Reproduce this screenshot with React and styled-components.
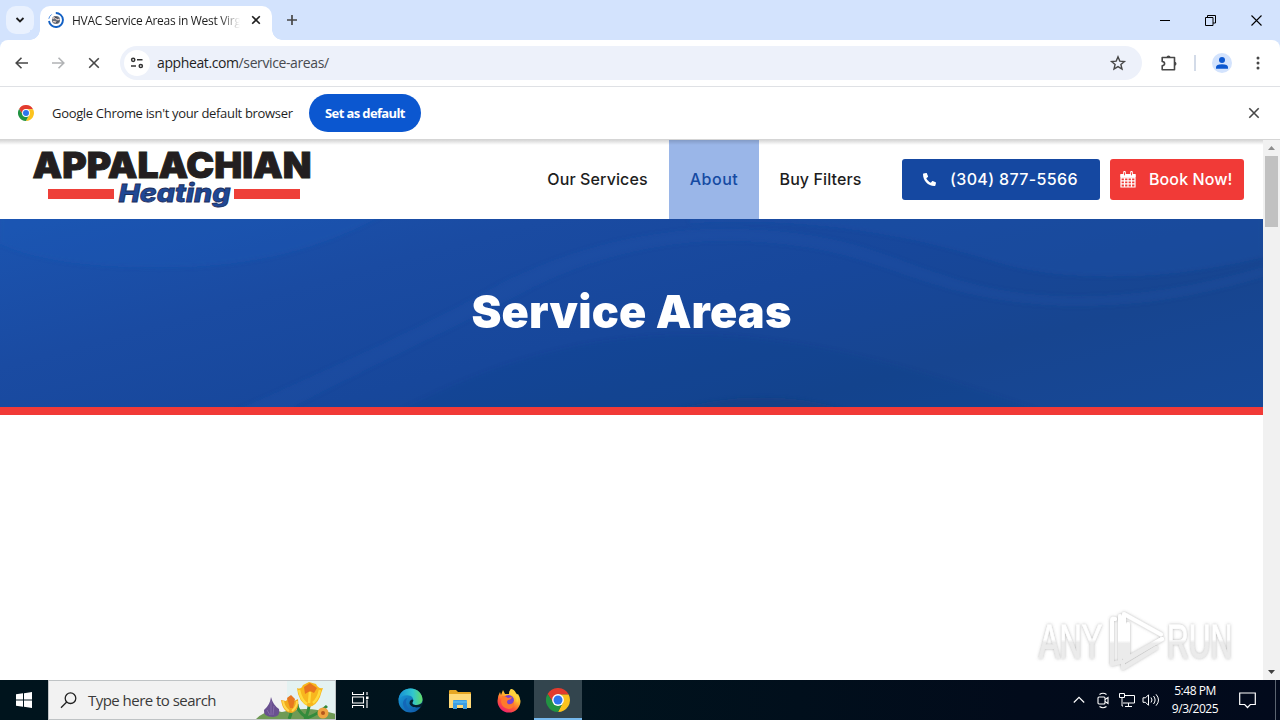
import React from "react";
import styled, { createGlobalStyle } from "styled-components";

const Global = createGlobalStyle`
  *, *::before, *::after { box-sizing: border-box; }
  html, body { margin: 0; width: 1280px; height: 720px; overflow: hidden; }
  body { font-family: "Open Sans", "Noto Sans", sans-serif; background: #fff; }
  svg { display: block; flex: none; }
  button { border: 0; padding: 0; background: none; font: inherit; color: inherit; }
`;

const Screen = styled.div`
  width: 1280px;
  height: 720px;
  display: flex;
  flex-direction: column;
`;

/* ---------- browser chrome ---------- */
const TabStrip = styled.div`
  height: 40px;
  flex: none;
  background: #d3e3fd;
  display: flex;
  align-items: flex-end;
`;
const TabSearch = styled.button`
  width: 28px;
  height: 28px;
  margin: 0 6px 6px;
  border-radius: 10px;
  background: #e9f1fe;
  display: grid;
  place-items: center;
`;
const Tab = styled.div`
  position: relative;
  width: 232px;
  height: 34px;
  padding: 0 8px 6px;
  border-radius: 10px 10px 0 0;
  background: #fff;
  display: flex;
  align-items: center;
  &::before, &::after {
    content: "";
    position: absolute;
    bottom: 0;
    width: 10px;
    height: 10px;
  }
  &::before { left: -10px; background: radial-gradient(circle at 0 0, #d3e3fd 9.5px, #fff 10px); }
  &::after { right: -10px; background: radial-gradient(circle at 100% 0, #d3e3fd 9.5px, #fff 10px); }
`;
const TabTitle = styled.span`
  width: 168px;
  margin-left: 8px;
  padding-top: 1px;
  font-size: 12px;
  line-height: 18px;
  letter-spacing: -0.3px;
  color: #1f1f1f;
  white-space: nowrap;
  overflow: hidden;
  mask-image: linear-gradient(to right, #000 148px, transparent 168px);
`;
const TabClose = styled.button`
  width: 16px;
  height: 16px;
  margin-left: 8px;
`;
const NewTab = styled.button`
  width: 28px;
  height: 28px;
  margin: 0 0 6px 6px;
  display: grid;
  place-items: center;
`;
const WindowControls = styled.div`
  margin-left: auto;
  height: 40px;
  display: flex;
`;
const WindowButton = styled.button`
  width: 46px;
  height: 40px;
  display: grid;
  place-items: center;
`;

const ToolbarBack = styled.div`
  flex: none;
  background: #d3e3fd;
`;
const Toolbar = styled.div`
  height: 47px;
  background: #fff;
  border-radius: 8px 8px 0 0;
  border-bottom: 1px solid #dfe1e5;
  display: flex;
  align-items: center;
  padding: 0 4px;
`;
const ToolButton = styled.button`
  width: 36px;
  height: 34px;
  flex: none;
  margin-left: ${(p) => p.$ml || 0}px;
  display: grid;
  place-items: center;
`;
const Omnibox = styled.div`
  width: 1022px;
  flex: none;
  height: 34px;
  margin-left: 8px;
  padding: 0 14px 0 4px;
  border-radius: 17px;
  background: #edf1fa;
  display: flex;
  align-items: center;
`;
const SiteInfo = styled.span`
  width: 26px;
  height: 26px;
  border-radius: 50%;
  background: #fff;
  display: grid;
  place-items: center;
`;
const Url = styled.span`
  flex: 1;
  margin-left: 7px;
  font-size: 14px;
  line-height: 20px;
  letter-spacing: -0.39px;
  color: #474a50;
  b { font-weight: 400; color: #1f1f1f; }
`;
const ToolSeparator = styled.span`
  width: 2px;
  height: 16px;
  margin: 0 8px 0 7px;
  background: #d3dbe8;
`;

const InfoBar = styled.div`
  height: 53px;
  flex: none;
  background: #fff;
  border-bottom: 1px solid #d5d5d5;
  display: flex;
  align-items: center;
  padding: 0 18px;
`;
const InfoText = styled.span`
  width: 241px;
  margin-left: 18px;
  font-size: 13px;
  letter-spacing: -0.32px;
  line-height: 20px;
  white-space: nowrap;
  color: #1f1f1f;
`;
const DefaultButton = styled.button`
  width: 112px;
  height: 38px;
  margin-left: 16px;
  border-radius: 19px;
  background: #0b57d0;
  color: #fff;
  font-size: 13px;
  font-weight: 700;
  letter-spacing: -0.62px;
`;
const InfoClose = styled.button`
  margin-left: auto;
  width: 16px;
  height: 16px;
`;

/* ---------- web page ---------- */
const Viewport = styled.div`
  position: relative;
  height: 540px;
  display: flex;
  background: #fff;
`;
const Page = styled.main`
  flex: 1;
  display: flex;
  flex-direction: column;
`;
const SiteHeader = styled.header`
  height: 79px;
  background: linear-gradient(rgba(0, 0, 0, 0.16), rgba(0, 0, 0, 0) 5px), #fff;
  display: flex;
  align-items: center;
  padding-right: 19px;
`;
const LogoLink = styled.div`
  width: 290px;
  height: 79px;
  margin-left: 28px;
`;
const Nav = styled.nav`
  margin-left: auto;
  display: flex;
  font-family: Inter, sans-serif;
  font-weight: 500;
`;
const NavItem = styled.a`
  width: ${(p) => p.$w}px;
  height: 79px;
  padding-bottom: 2px;
  display: flex;
  align-items: center;
  justify-content: center;
  font-size: 16px;
  letter-spacing: ${(p) => p.$track}px;
  color: ${(p) => (p.$active ? "#154aa2" : "#1d1d1d")};
  background: ${(p) => (p.$active ? "linear-gradient(rgba(0,0,0,0.15), rgba(0,0,0,0) 5px), #9ab6e8" : "none")};
`;
const ActionButton = styled.a`
  width: ${(p) => p.$w}px;
  height: 41px;
  margin-left: ${(p) => p.$ml}px;
  padding-left: ${(p) => p.$pl}px;
  gap: ${(p) => p.$gap}px;
  border-radius: 3px;
  background: ${(p) => p.$bg};
  color: #fff;
  display: flex;
  align-items: center;
  white-space: nowrap;
  font: 500 16px Inter, sans-serif;
  letter-spacing: ${(p) => p.$track}px;
  span { padding-bottom: 2px; }
`;
const Hero = styled.section`
  display: grid;
  height: 196px;
  border-bottom: 8px solid #f13a37;
  background: linear-gradient(165deg, #1b54b0 0%, #1a4ba2 28%, #17479b 52%, #174590 75%, #174897 100%);
  & > * { grid-area: 1 / 1; }
`;
const HeroTitle = styled.h1`
  margin: 0;
  align-self: center;
  justify-self: center;
  padding-bottom: 2px;
  font: 900 45px/60px Inter, sans-serif;
  letter-spacing: 0.2px;
  color: #fff;
  white-space: nowrap;
`;
const Scrollbar = styled.div`
  width: 17px;
  background: #f1f1f1;
  display: flex;
  flex-direction: column;
  align-items: center;
  justify-content: space-between;
`;
const ScrollArrow = styled.span`
  width: 17px;
  height: 16px;
  display: grid;
  place-items: center;
`;
const ScrollThumb = styled.span`
  width: 13px;
  height: 71px;
  background: #c1c1c1;
  margin-bottom: auto;
`;
const Watermark = styled.div`
  position: absolute;
  left: 1030px;
  top: 464px;
`;

/* ---------- taskbar ---------- */
const Taskbar = styled.footer`
  height: 40px;
  flex: none;
  background: linear-gradient(to right, #00141d, #00131d 45%, #020b1b 80%, #020a1c);
  display: flex;
`;
const TaskButton = styled.button`
  width: ${(p) => p.$w || 49}px;
  height: 40px;
  display: grid;
  place-items: center;
  background: ${(p) => (p.$active ? "#33454e" : "none")};
  border-bottom: ${(p) => (p.$active ? "2px solid #76b9ed" : "0")};
  padding-top: ${(p) => (p.$active ? "2px" : "0")};
`;
const SearchBox = styled.div`
  width: 288px;
  height: 40px;
  background: #f2f2f2;
  border: 1px solid #bfc3c5;
  display: flex;
  align-items: center;
  padding-left: 11px;
  span {
    flex: 1;
    margin-left: 11px;
    font-size: 15px;
    letter-spacing: -0.53px;
    color: #3a3a3a;
    white-space: nowrap;
  }
`;
const Tray = styled.div`
  margin-left: auto;
  display: flex;
  align-items: center;
`;
const TrayIcon = styled.span`
  width: 24px;
  display: grid;
  place-items: center;
`;
const Clock = styled.div`
  width: 64px;
  text-align: center;
  color: #fff;
  font-size: 12px;
  line-height: 18px;
  letter-spacing: -0.45px;
`;
const ShowDesktop = styled.span`
  height: 40px;
  width: 5px;
  margin-left: 8px;
  border-left: 1px solid #5b6470;
`;

const Cross = ({ size = 16, r = 4.2, color = "#474747", w = 1.6 }) => (
  <svg width={size} height={size} viewBox="-8 -8 16 16">
    <path d={`M${-r} ${-r}L${r} ${r}M${r} ${-r}L${-r} ${r}`} stroke={color} strokeWidth={w} fill="none" />
  </svg>
);

const ChromeLogo = ({ size }) => (
  <svg width={size} height={size} viewBox="0 0 48 48">
    <path d="M24 13H44.800V12A24 24 0 0 0 3.200 12L14.500 29.500z" fill="#e33b2e" />
    <path d="M24 13H45.300A24 24 0 0 1 24 48L33.500 29.500z" fill="#fcc31e" />
    <path d="M14.500 29.500L3.200 12A24 24 0 0 0 24 48L33.500 29.500z" fill="#229342" />
    <circle cx="24" cy="24" r="11.800" fill="#fff" />
    <circle cx="24" cy="24" r="9" fill="#2d75ee" />
  </svg>
);

const Favicon = () => (
  <svg width="16" height="16" viewBox="0 0 16 16" fill="none">
    <path d="M7.800 1A7 7 0 1 1 1 9" stroke="#1260c4" strokeWidth="1.900" />
    <path d="M.8 6.800A7 7 0 0 1 3.700 2.400" stroke="#4f8ee0" strokeWidth="1" />
    <circle cx="8" cy="8" r="4.100" fill="#69717d" />
    <path d="M4.600 6.800c2-2 3-.8 3.800.2s2 1 3.200-.2M5 9.800c1.800-.8 2.500.2 3.600.6" stroke="#f0d7cf" strokeWidth="1.200" />
    <path d="M6.500 5l3 1.200M8 10.500l2.500-1" stroke="#393e4c" />
  </svg>
);

const Logo = () => (
  <svg width="290" height="79" viewBox="28 140 290 79">
    <text x="32.500" y="178" fontFamily="Inter, sans-serif" fontWeight="900" fontSize="35" textLength="279" lengthAdjust="spacingAndGlyphs" fill="#231f20" stroke="#231f20" strokeWidth=".9">APPALACHIAN</text>
    <path d="M48 189h66v10H48zM234 189h66v10h-66z" fill="#ee4039" />
    <text x="118.500" y="201.500" fontFamily="Inter, sans-serif" fontWeight="800" fontStyle="italic" fontSize="25" textLength="112" lengthAdjust="spacingAndGlyphs" fill="#1f4896" stroke="#1c2e5c" strokeWidth=".8">Heating</text>
  </svg>
);

const HeroWaves = () => (
  <svg width="1263" height="188" viewBox="0 0 1263 188" fill="none">
    <defs>
      <filter id="soft" x="-5%" y="-20%" width="110%" height="140%"><feGaussianBlur stdDeviation="2" /></filter>
    </defs>
    <g filter="url(#soft)">
      <path d="M0-8H390C330 26 270 44 190 48C110 50 45 45 0 25z" fill="#1d5ab6" opacity=".35" />
      <path d="M235 192C340 145 430 105 500 65C580 25 660 8 740 10C860 14 890 42 970 64C1060 88 1160 78 1263 48V58C1160 90 1060 96 965 74C880 52 850 26 740 22C670 20 590 37 520 75C440 115 365 150 285 192z" fill="#2a5cb0" opacity=".2" />
      <path d="M690-8H1263V38C1160 64 1060 62 1000 44C900 12 800-2 690 4z" fill="#2456ac" opacity=".3" />
      <path d="M400 192C500 140 590 115 700 116C820 118 930 155 1040 192z" fill="#153f80" opacity=".17" />
      <path d="M670 192C740 172 800 176 850 192z" fill="#123b78" opacity=".35" />
    </g>
  </svg>
);

const Calendar = () => (
  <svg width="16" height="17" viewBox="0 0 16 17" fill="none" stroke="#fff">
    <path d="M1 3.500h14v12.500H1zM1 6.800h14M1 9.800h14M1 12.800h14M4.500 6.500V16M8 6.500V16M11.500 6.500V16" strokeWidth="1.200" />
    <path d="M1 3.500h14V6H1z" fill="#fff" />
    <path d="M4.500 1.200v3M11.500 1.200v3" strokeWidth="2.600" strokeLinecap="round" />
    <path d="M4.500 1.300v3M11.500 1.300v3" stroke="#f13a37" strokeWidth=".9" />
  </svg>
);

const WatermarkArt = () => (
  <svg width="212" height="76" viewBox="0 0 212 76" overflow="visible">
    <defs>
      <filter id="glow" x="-10%" y="-20%" width="120%" height="140%">
        <feDropShadow dx="0" dy="0" stdDeviation="1.700" floodColor="#666" floodOpacity=".5" />
      </filter>
      <linearGradient id="fade" gradientUnits="userSpaceOnUse" x1="0" y1="0" x2="0" y2="76">
        <stop offset=".48" stopColor="#fff" />
        <stop offset=".52" stopColor="#ebebeb" />
      </linearGradient>
      <linearGradient id="textFade" gradientUnits="userSpaceOnUse" x1="0" y1="-55" x2="0" y2="21">
        <stop offset=".48" stopColor="#fff" />
        <stop offset=".52" stopColor="#ebebeb" />
      </linearGradient>
    </defs>
    <g filter="url(#glow)">
      <g fontFamily="'Liberation Sans', sans-serif" fontSize="49" fill="url(#textFade)" stroke="url(#textFade)" strokeWidth=".8">
        <text transform="translate(9 54) scale(.66 1)" textLength="96" lengthAdjust="spacingAndGlyphs">ANY</text>
        <text transform="translate(137 54) scale(.66 1)" textLength="99" lengthAdjust="spacingAndGlyphs">RUN</text>
      </g>
      <g fill="none" stroke="url(#fade)" strokeWidth="4" strokeLinejoin="round" strokeLinecap="round">
        <path d="M94 54V10l37 20.500M94 11v33" />
        <path d="M98 20v34l34-19" />
        <path d="M82 16q0-2 3-1M82 17v43l8-2V12" />
        <path d="M132 35L93 58v6L126 44" />
      </g>
    </g>
  </svg>
);

const Flowers = () => (
  <svg width="79" height="38" viewBox="-1 0 79 38">
    <rect x="30" width="49" height="38" fill="#e4f2f2" />
    <path d="M-1 38Q10 27 25 31Q50 24 79 33V38z" fill="#6f9a55" />
    <path d="M32 38Q37 28 31 22M48 38Q53 27 52 21M47 38Q60 34 70 25M49 36Q40 30 40 23" stroke="#348b3c" strokeWidth="3" fill="none" />
    <path d="M14 16q2 8 8 12q2 7-6 8q-10 0-9-7q6-5 7-13z" fill="#695090" />
    <path d="M14 20v14M17 25l-1 9M10 29l3 5" stroke="#856aa8" />
    <path d="M24 19l5 1l4-5l4 5l4-2q2 11-6 14q-9 0-11-13z" fill="#f2a91e" />
    <path d="M30 17l4-3l4 4l-2 9h-3z" fill="#e77720" /><path d="M26 20q1 7 6 10M40 20q0 6-5 10" stroke="#ffd84e" strokeWidth="2" fill="none" />
    <path d="M40 7q4 2 6-3l6-3l7 2q2 5 7 4q-2 5-3 9q-4 9-11 10q-11-5-12-19z" fill="#f8b71e" />
    <path d="M47 6l6-4l7 5l-3 5l-4-2l-5 3z" fill="#e8751f" /><path d="M42 9q2 10 8 14M63 9q-2 9-7 13M53 11l-1 11" stroke="#ffdb3d" strokeWidth="2.500" fill="none" />
    <circle cx="66" cy="32" r="5.500" fill="#efa441" /><circle cx="66" cy="32" r="2" fill="#b4561e" />
  </svg>
);

const EdgeLogo = () => (
  <svg width="25" height="25" viewBox="0 0 25 25">
    <defs>
      <linearGradient id="edgeTop" x1="0" x2="1"><stop stopColor="#168fd4" /><stop offset=".6" stopColor="#31c6cf" /><stop offset="1" stopColor="#63db65" /></linearGradient>
      <linearGradient id="edgeLow" x1="0" y1="0" x2="1" y2="1"><stop stopColor="#1aa1df" /><stop offset="1" stopColor="#0d519e" /></linearGradient>
    </defs>
    <circle cx="12.500" cy="12.500" r="12" fill="url(#edgeLow)" />
    <path d="M.6 11C1.500 4 6.500.4 12.500.4C20 .4 24.500 6 24.500 11.500C24.500 15 22 17 18.500 17C15 17 13.500 15.500 15 13.500C16.500 10 13 7 9 7.200C5 7.300 2 9 .6 12z" fill="url(#edgeTop)" />
    <path d="M9.500 10C6 14 9 23 17 23C10 26 3 19 5.500 13C6.500 11 8 10 9.500 10z" fill="#1367b8" />
    <path d="M15 13.500C13.500 15.500 15 17 18.500 17C21 17 23 16 24.500 14.500Q25 17 23.500 18.500C20 20 13 20 11.500 15.500C11.500 12.500 13 11.500 14.500 11.500C15.500 12 15.500 12.800 15 13.500z" fill="#04202f" />
  </svg>
);

const FolderLogo = () => (
  <svg width="22" height="20" viewBox="0 0 22 20">
    <path d="M0 1q0-1 1-1h6l2 2h12q1 0 1 1v5H0z" fill="#e6a623" />
    <path d="M0 4h22v14H0z" fill="#ffd977" />
    <path d="M4 11q0-1 1-1h12q1 0 1 1v8h-4v-4H8v4H4z" fill="#3d9de0" />
    <path d="M4 11h14v2H4z" fill="#4fb2ed" />
  </svg>
);

const FirefoxLogo = () => (
  <svg width="24" height="25" viewBox="0 0 24 25">
    <defs>
      <linearGradient id="fox" x1=".8" y1="0" x2=".2" y2="1"><stop stopColor="#fff04a" /><stop offset=".38" stopColor="#ffb52c" /><stop offset=".65" stopColor="#ff5b35" /><stop offset="1" stopColor="#ed1679" /></linearGradient>
    </defs>
    <path d="M14 1q4 2 5 6l2-1q2 3 2.500 7A11.500 11.500 0 0 1 .5 13Q.5 8 3 4L4 7L6 2L8 6L12 6Q12 3 14 1z" fill="url(#fox)" />
    <circle cx="11.500" cy="12.500" r="5.500" fill="#7b42cf" />
    <path d="M5 8q4 0 6 2l4-1q-1 3-4 3q-2 2 0 4q4 1 6-3q1 7-5 8q-7-1-8-7z" fill="#ff7a2b" />
    <path d="M12 6q8 1 8 9q3-6-1-10q-2-4-5-4q-2 2-2 5z" fill="#ffd23d" />
  </svg>
);

const LineIcon = (props) => <svg fill="none" stroke="#fff" {...props} />;

export default function App() {
  return (
    <>
      <Global />
      <Screen>
        <TabStrip>
          <TabSearch><svg width="10" height="8" viewBox="0 0 10 8"><path d="M1.500 2L5 5.500L8.500 2" stroke="#1f1f1f" strokeWidth="1.800" fill="none" /></svg></TabSearch>
          <Tab>
            <Favicon />
            <TabTitle>HVAC Service Areas in West Virginia</TabTitle>
            <TabClose><Cross r={3.8} color="#1f1f1f" /></TabClose>
          </Tab>
          <NewTab><svg width="12" height="12" viewBox="0 0 12 12"><path d="M6 1v10M1 6h10" stroke="#474747" strokeWidth="1.700" /></svg></NewTab>
          <WindowControls>
            <WindowButton><svg width="10" height="10"><path d="M0 5.500h10" stroke="#000" /></svg></WindowButton>
            <WindowButton><svg width="12" height="11" fill="none" stroke="#000"><path d="M.5 2.500h7.500v8H.5zM2.500 2.500V.5h8v7.500H8" /></svg></WindowButton>
            <WindowButton><svg width="12" height="11"><path d="M.5.5l10 10M10.500.5l-10 10" stroke="#000" strokeWidth="1.100" /></svg></WindowButton>
          </WindowControls>
        </TabStrip>
        <ToolbarBack>
          <Toolbar>
            <ToolButton><svg width="14" height="12" viewBox="0 0 14 12" fill="none" stroke="#474747" strokeWidth="1.600"><path d="M13 6H1.500M6.500.7L1.200 6l5.300 5.300" /></svg></ToolButton>
            <ToolButton><svg width="14" height="12" viewBox="0 0 14 12" fill="none" stroke="#b1b3b5" strokeWidth="1.600"><path d="M1 6h11.500M7.500.7L12.800 6l-5.300 5.300" /></svg></ToolButton>
            <ToolButton><Cross r={4.8} /></ToolButton>
            <Omnibox>
              <SiteInfo><svg width="14" height="12" viewBox="0 0 14 12" fill="none" stroke="#333" strokeWidth="1.500"><circle cx="3.200" cy="2.800" r="1.600" /><path d="M7 2.800h5.500M1 9h5" /><circle cx="10.800" cy="9" r="1.600" /></svg></SiteInfo>
              <Url><b>appheat.com</b>/service-areas/</Url>
              <svg width="20" height="20" viewBox="0 0 20 20" fill="none" stroke="#474747" strokeWidth="1.400"><path d="M10 3.800l1.800 4.300 4.600.4-3.500 3 1.100 4.500-4-2.400-4 2.400 1.100-4.500-3.500-3 4.600-.4z" /></svg>
            </Omnibox>
            <ToolButton $ml={9}>
              <svg width="18" height="18" viewBox="0 0 18 18"><path d="M2.200 3.500h12.300v12.300H2.200v-4q2.400-.3 2.400-2.200T2.200 7.500z" fill="none" stroke="#474747" strokeWidth="1.600" strokeLinejoin="round" /><path d="M6.500 3.500a2 2 0 0 1 4 0zM14.500 7.700a2 2 0 0 1 0 4z" fill="#474747" /></svg>
            </ToolButton>
            <ToolSeparator />
            <ToolButton><svg width="20" height="20" viewBox="0 0 20 20"><circle cx="10" cy="10" r="10" fill="#d3e3fd" /><circle cx="10" cy="7" r="3" fill="#0b57d0" /><path d="M4 15.800v-1.600q0-3 6-3t6 3v1.600z" fill="#0b57d0" /></svg></ToolButton>
            <ToolButton><svg width="4" height="14" fill="#474747"><circle cx="2" cy="2" r="1.500" /><circle cx="2" cy="7" r="1.500" /><circle cx="2" cy="12" r="1.500" /></svg></ToolButton>
          </Toolbar>
        </ToolbarBack>
        <InfoBar>
          <ChromeLogo size={16} />
          <InfoText>Google Chrome isn't your default browser</InfoText>
          <DefaultButton>Set as default</DefaultButton>
          <InfoClose><Cross r={4.7} /></InfoClose>
        </InfoBar>

        <Viewport>
          <Page>
            <SiteHeader>
              <LogoLink><Logo /></LogoLink>
              <Nav>
                <NavItem $w={143} $track={0.12}>Our Services</NavItem>
                <NavItem $w={90} $track={0.5} $active>About</NavItem>
                <NavItem $w={123} $track={0.1}>Buy Filters</NavItem>
              </Nav>
              <ActionButton $w={198} $ml={20} $pl={21} $gap={14} $bg="#1548a1" $track={0.35}>
                <svg width="13" height="13" viewBox="0 0 512 512"><path fill="#fff" d="M493 24.600l-104-24c-11-2.600-22 3.300-27 13.700l-48 112c-4 10-1 21 7 28l61 50c-36 76-99 140-178 178l-50-61c-7-8-18-11-28-7l-112 48c-10 5-16 16-13 27l24 104c3 11 12 19 24 19C306 512 512 306 512 48c0-11-8-21-19-23.400z" transform="matrix(-1 0 0 1 512 0)" /></svg>
                <span>(304) 877-5566</span>
              </ActionButton>
              <ActionButton $w={134} $ml={10} $pl={10} $gap={13} $bg="#f13a37" $track={0.1}>
                <Calendar />
                <span>Book Now!</span>
              </ActionButton>
            </SiteHeader>
            <Hero><HeroWaves /><HeroTitle>Service Areas</HeroTitle></Hero>
          </Page>
          <Scrollbar>
            <ScrollArrow><svg width="7" height="4"><path d="M0 4L3.500 0L7 4z" fill="#8c8c8c" /></svg></ScrollArrow>
            <ScrollThumb />
            <ScrollArrow><svg width="7" height="4"><path d="M0 0h7L3.500 4z" fill="#404040" /></svg></ScrollArrow>
          </Scrollbar>
          <Watermark><WatermarkArt /></Watermark>
        </Viewport>

        <Taskbar>
          <TaskButton $w={48}><svg width="16" height="16" viewBox="0 0 16 16" fill="#fff"><path d="M0 2.300l7-1V7.500H0zM8 1.200L16 0v7.500H8zM0 8.500h7v6.200l-7-1zM8 8.500h8V16l-8-1.200z" /></svg></TaskButton>
          <SearchBox>
            <LineIcon width="17" height="17" viewBox="0 0 17 17" stroke="#222" strokeWidth="1.300"><circle cx="10.500" cy="6.200" r="5.300" /><path d="M6.700 10L1 15.800" /></LineIcon>
            <span>Type here to search</span>
            <Flowers />
          </SearchBox>
          <TaskButton $w={49}>
            <LineIcon width="17" height="16" viewBox="0 0 17 16" strokeWidth="1.100"><path d="M.5 0v2.500h11V0M.5 5h11v6H.5zM.5 16v-2.500h11V16M15 0v3M15 7.500V16" /><path d="M14 4.500h2.500v2.500H14z" fill="#fff" stroke="none" /></LineIcon>
          </TaskButton>
          <TaskButton $w={51}><EdgeLogo /></TaskButton>
          <TaskButton $w={47}><FolderLogo /></TaskButton>
          <TaskButton $w={51}><FirefoxLogo /></TaskButton>
          <TaskButton $w={48} $active><ChromeLogo size={24} /></TaskButton>
          <Tray>
            <TrayIcon><LineIcon width="12" height="8" strokeWidth="1.200"><path d="M.8 6.500L6 1.300l5.200 5.200" /></LineIcon></TrayIcon>
            <TrayIcon><LineIcon width="12" height="17" viewBox="0 0 12 17" strokeWidth="1.100"><rect x="1" y="5" width="7" height="7" rx="1" /><path d="M8 7.500l3-2v6l-3-2M2.500 2.500q3.500-2.500 7 0M2.500 14.500q3.500 2.500 7 0" /></LineIcon></TrayIcon>
            <TrayIcon><LineIcon width="17" height="14" viewBox="0 0 17 14"><path d="M6 2.500h9.500v7.500H4M.5.500h5v4h-5zM3 4.500v8.500h1M9.500 10v3M6 13.500h7" /></LineIcon></TrayIcon>
            <TrayIcon><LineIcon width="18" height="14" viewBox="0 0 18 14"><path d="M1 4.800h2.500l3-3v10.500l-3-3H1zM9 4.500q2 2.500 0 5M11.500 3q3.200 4 0 8M14 1.300q5 5.700 0 11.400" /></LineIcon></TrayIcon>
            <Clock>5:48 PM<br />9/3/2025</Clock>
            <TaskButton $w={40}><LineIcon width="17" height="17" viewBox="0 0 17 17" strokeWidth="1.200"><path d="M.7 1h15.600v11.500h-5l-2.800 3-2.800-3h-5z" /></LineIcon></TaskButton>
            <ShowDesktop />
          </Tray>
        </Taskbar>
      </Screen>
    </>
  );
}
